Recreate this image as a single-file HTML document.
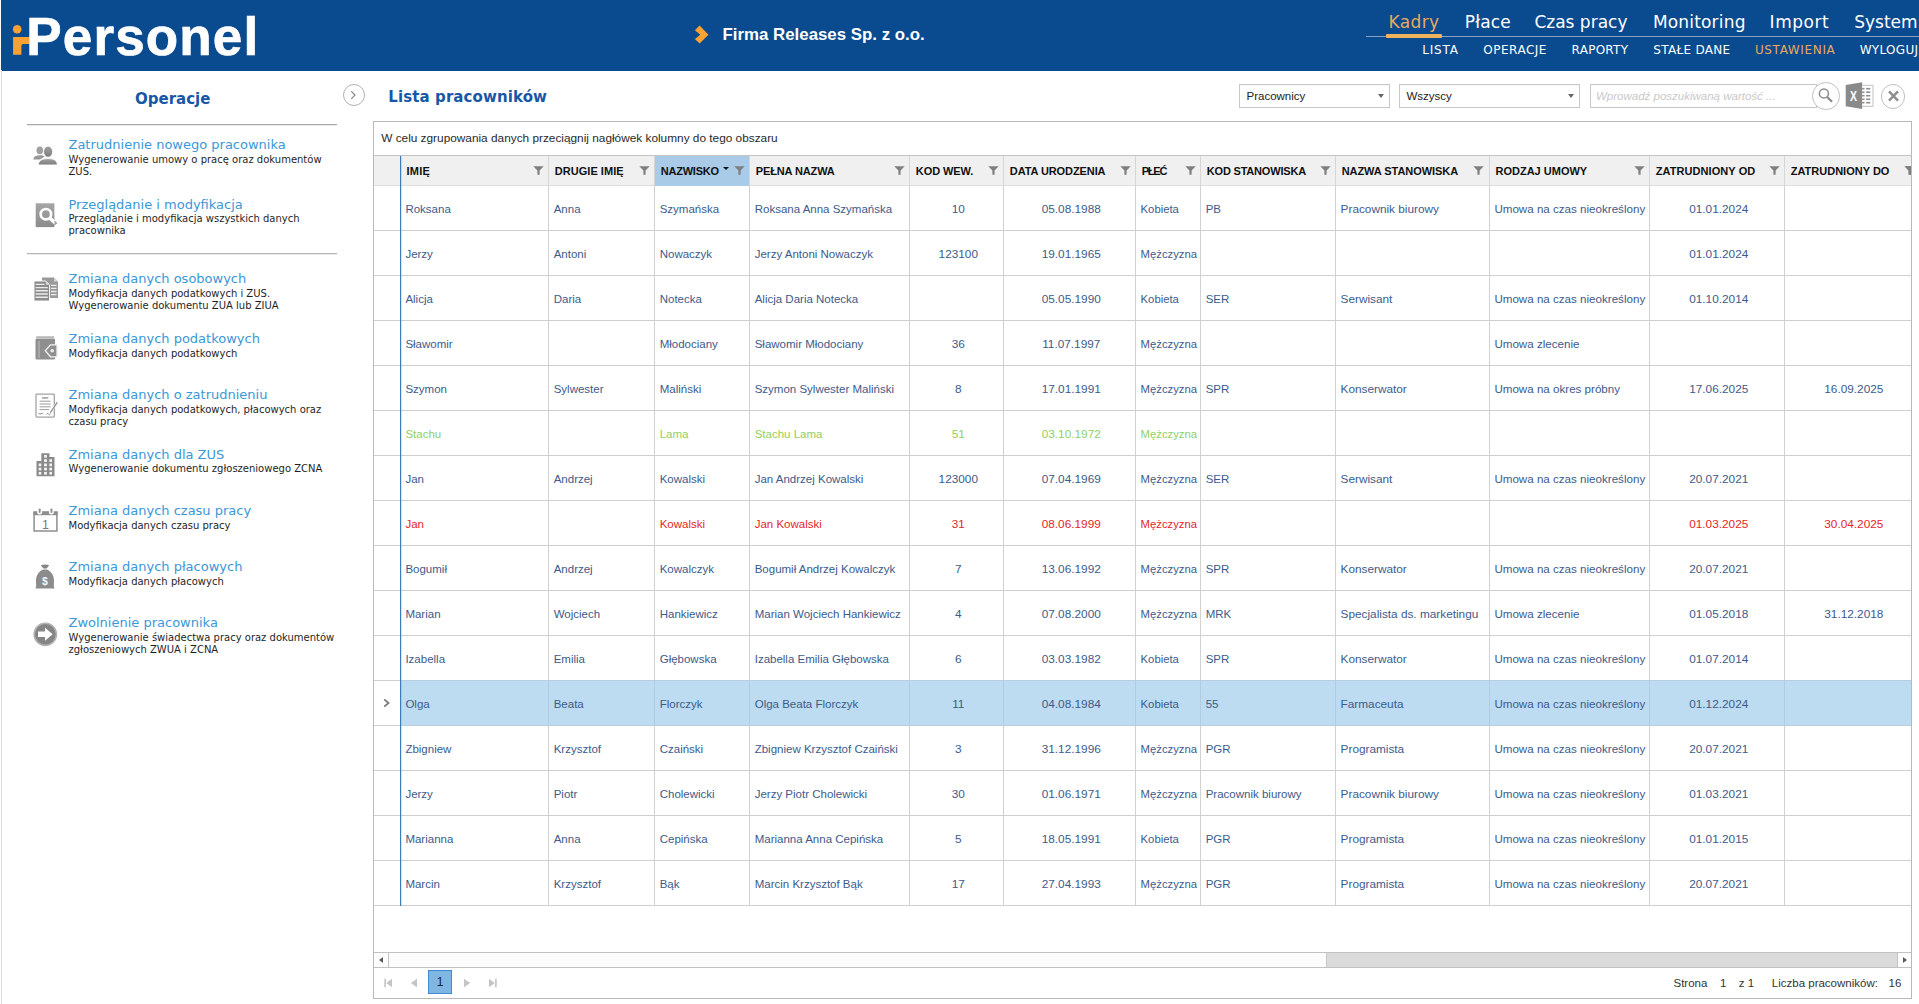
<!DOCTYPE html><html lang="pl"><head><meta charset="utf-8"><title>iPersonel - Lista pracowników</title><style>
*{box-sizing:border-box;margin:0;padding:0}
html,body{width:1919px;height:1004px;overflow:hidden;background:#fff}
body{position:relative;font-family:"Liberation Sans",sans-serif;color:#222}
.abs{position:absolute}
#hdr{position:absolute;left:1px;top:0;width:1918px;height:70.5px;background:#0a4a8f;overflow:hidden}
#lborder{position:absolute;left:1px;top:70px;width:1px;height:934px;background:#dcdcdc}
.logo{position:absolute;left:25.3px;top:6.5px;font:bold 53px/60px "Liberation Sans",sans-serif;color:#fff;white-space:nowrap;letter-spacing:1.15px;-webkit-text-stroke:0.7px #fff}
.firm{position:absolute;left:721.5px;top:23.2px;font:bold 16.85px/24px "Liberation Sans",sans-serif;color:#fff;white-space:nowrap}
.nav1 span,.nav2 span{position:absolute;white-space:nowrap;color:#fff}
.nav1 span{top:11px;font:17px/22px "DejaVu Sans","Liberation Sans",sans-serif}
.nav2 span{top:41.6px;font:12px/16px "DejaVu Sans","Liberation Sans",sans-serif;letter-spacing:.3px}
.or{color:#eaa95c !important}
.side-title{position:absolute;left:68.5px;white-space:nowrap;font:13px/16px "DejaVu Sans","Liberation Sans",sans-serif;color:#3a98d6}
.side-desc{position:absolute;left:68.5px;width:270px;font:10px/12px "DejaVu Sans","Liberation Sans",sans-serif;color:#1f1f1f}
.side-desc div{white-space:nowrap}
.hline{position:absolute;left:27px;width:310px;height:1px;background:#a9a9a9;box-shadow:0 1px 0 rgba(170,170,170,.25)}
.h1{position:absolute;white-space:nowrap;font:bold 15px/20px "DejaVu Sans","Liberation Sans",sans-serif;color:#1857a6}
.sel{position:absolute;top:84px;height:24px;border:1px solid #c8c8c8;background:#fff;font:11.5px/22px "Liberation Sans",sans-serif;color:#222;padding-left:6.5px;box-shadow:inset 0 1px 1px rgba(0,0,0,.04)}
.sel i{position:absolute;right:5px;top:9px;width:0;height:0;border-left:3.5px solid transparent;border-right:3.5px solid transparent;border-top:4px solid #666}
#grid{position:absolute;left:373px;top:121px;width:1539px;height:877.5px;border:1px solid #b9b9b9;background:#fff;overflow:hidden}
.gp{position:absolute;left:0;top:0;width:100%;height:33.5px;border-bottom:1px solid #c4c4c4;font:11.83px/33px "Liberation Sans",sans-serif;color:#2a2a2a;padding-left:7.2px;white-space:nowrap}
.hrow{position:absolute;left:0;top:33.5px;width:100%;height:30px;background:#f0f0f0;border-bottom:1px solid #dedede}
.hc{position:absolute;top:0;height:30px;border-left:1px solid #d6d6d6;font:bold 11px/31.5px "Liberation Sans",sans-serif;color:#111;padding-left:5.5px;white-space:nowrap;overflow:hidden}
.hc.sorted{background:#a9cbe7}
.hc svg{position:absolute;top:10.5px;right:4.5px}
.row{position:absolute;left:0;width:100%;height:45px;border-bottom:1px solid #cfcfcf}
.c{position:absolute;top:0;height:44px;border-left:1px solid #d2d2d2;font:11.4px/46px "Liberation Sans",sans-serif;color:#3c5b8b;padding-left:4.4px;white-space:nowrap;overflow:hidden}
.c.ctr{text-align:center;padding-left:3px;font-size:11.8px}
.row.g .c{color:#8fd05f}
.row.r .c{color:#e5261f}
.row.s{background:linear-gradient(90deg,#fff 26px,#bddbf1 26px)}
.row.s .c{border-left-color:#b3cbe0}
.row.s:before,.row.s:after{content:"";position:absolute;left:27px;right:0;height:1px;background:#b9cde0}
.row.s:before{top:-1px}
.row.s:after{bottom:-1px}
.vline{position:absolute;left:26px;top:34px;width:1px;height:750px;background:#3a7cbc;box-shadow:1px 0 0 rgba(59,130,198,.2)}
</style></head><body>
<div id="hdr">
<svg class="abs" style="left:0;top:0" width="70" height="70" viewBox="0 0 70 70"><circle cx="16.2" cy="29.3" r="4.3" fill="#f8a233"/><path d="M12.1 37.1H28.6V43.9H22.4Q20.4 43.9 20.4 45.9V54.7H12.1Z" fill="#f8a233"/></svg>
<div class="logo">Personel</div>
<svg class="abs" style="left:693px;top:25px" width="16" height="20" viewBox="0 0 16 20"><path d="M0.9 5.3L5.6 0.6L14.5 9.7L5.6 18.6L0.9 14.1L6.3 9.7Z" fill="#f8a233"/></svg>
<div class="firm">Firma Releases Sp. z o.o.</div>
<div class="abs" style="left:1365px;top:35.5px;width:560px;height:1.5px;background:#8aa3c4"></div>
<div class="abs" style="left:1385px;top:34px;width:56px;height:3.6px;background:#efb25e;border-radius:1px"></div>
<div class="nav1">
<span id="n1_0" style="left:1387.6px;letter-spacing:0.35px" class="or">Kadry</span>
<span id="n1_1" style="left:1463.8px;letter-spacing:0.15px">Płace</span>
<span id="n1_2" style="left:1533.4px;letter-spacing:0.00px">Czas pracy</span>
<span id="n1_3" style="left:1651.9px;letter-spacing:0.18px">Monitoring</span>
<span id="n1_4" style="left:1768.6px;letter-spacing:0.55px">Import</span>
<span id="n1_5" style="left:1853.2px;letter-spacing:0.00px">System</span>
</div>
<div class="nav2">
<span id="n2_0" style="left:1421.2px;letter-spacing:0.80px">LISTA</span>
<span id="n2_1" style="left:1482.3px;letter-spacing:0.50px">OPERACJE</span>
<span id="n2_2" style="left:1570.6px;letter-spacing:0.25px">RAPORTY</span>
<span id="n2_3" style="left:1652.3px;letter-spacing:0.30px">STAŁE DANE</span>
<span id="n2_4" style="left:1753.9px;letter-spacing:0.65px" class="or">USTAWIENIA</span>
<span id="n2_5" style="left:1858.7px;letter-spacing:0.30px">WYLOGUJ</span>
</div>
</div>
<div id="lborder"></div>
<div class="h1" id="h_op" style="left:135px;top:89px">Operacje</div>
<div class="hline" style="top:124px"></div>
<div class="hline" style="top:253px;background:#b6b6b6"></div>
<svg class="abs" style="left:33px;top:145px" width="26" height="21" viewBox="0 0 26 21"><defs><linearGradient id="gp" x1="0" y1="0" x2="0" y2="1"><stop offset="0" stop-color="#a2a2a2"/><stop offset="1" stop-color="#7c7c7c"/></linearGradient></defs><ellipse cx="6.8" cy="5.3" rx="3.3" ry="3.9" fill="#a0a0a0"/><path d="M0.2 14.6C0.6 11.6 3 10.3 6.8 10.3C9 10.3 10.6 10.8 11.6 11.6L7 14.6Z" fill="#989898"/><path d="M5.3 20C5.3 15.4 9 13.6 15 13.6C21 13.6 24.3 15.4 24.3 20Z" fill="url(#gp)" stroke="#fff" stroke-width="0.9"/><ellipse cx="15.1" cy="6.7" rx="4.6" ry="5.6" fill="url(#gp)" stroke="#fff" stroke-width="1"/></svg>
<div class="side-title" id="st0" style="top:136.8px">Zatrudnienie nowego pracownika</div>
<div class="side-desc" id="sd0" style="top:153.5px"><div>Wygenerowanie umowy o pracę oraz dokumentów</div><div>ZUS.</div></div>
<svg class="abs" style="left:35px;top:203px" width="24" height="25" viewBox="0 0 24 25"><defs><linearGradient id="gs" x1="0" y1="0" x2="0" y2="1"><stop offset="0" stop-color="#a6a6a6"/><stop offset="1" stop-color="#8c8c8c"/></linearGradient></defs><rect x="0.7" y="0.3" width="18.7" height="23.8" fill="url(#gs)"/><circle cx="10.9" cy="11.2" r="5.2" fill="none" stroke="#fff" stroke-width="2.7"/><path d="M15 15.3L20.3 20" stroke="#fff" stroke-width="3.6" stroke-linecap="butt"/><path d="M19.4 17.2L22.4 20.2L19.6 22.6Z" fill="#a0a0a0"/></svg>
<div class="side-title" id="st1" style="top:196.5px">Przeglądanie i modyfikacja</div>
<div class="side-desc" id="sd1" style="top:213.2px"><div>Przeglądanie i modyfikacja wszystkich danych</div><div>pracownika</div></div>
<svg class="abs" style="left:32.5px;top:277px" width="26" height="25" viewBox="0 0 26 25"><path d="M9 0.5H21L25 4.5V21H9Z" fill="#9a9a9a"/><path d="M21 0.5V4.5H25Z" fill="#d6d6d6"/><g stroke="#ececec" stroke-width="1.3"><path d="M18 8.3H23.5M18 11.4H23.5M18 14.5H23.5M18 17.6H23.5"/></g><path d="M1 4H12.8L16.5 7.7V24H1Z" fill="#8c8c8c" stroke="#fff" stroke-width="0.9"/><path d="M12.8 4V7.7H16.5Z" fill="#dadada"/><g stroke="#ececec" stroke-width="1.4"><path d="M2.6 7.4H11.5M2.6 10.6H14.8M2.6 13.8H14.8M2.6 17H14.8M2.6 20.2H14.8"/></g></svg>
<div class="side-title" id="st2" style="top:271.1px">Zmiana danych osobowych</div>
<div class="side-desc" id="sd2" style="top:287.8px"><div>Modyfikacja danych podatkowych i ZUS.</div><div>Wygenerowanie dokumentu ZUA lub ZIUA</div></div>
<svg class="abs" style="left:35px;top:335px" width="23" height="26" viewBox="0 0 23 26"><path d="M1.2 2.1H19" stroke="#ababab" stroke-width="1.5"/><rect x="0.5" y="3.6" width="19.5" height="21" rx="1.3" fill="#8f8f8f"/><path d="M4 6V23" stroke="#c4c4c4" stroke-width="0.9"/><path d="M10.3 15.8L15.5 9.8H22V21.8H15.5Z" fill="#8f8f8f" stroke="#f2f2f2" stroke-width="1.3"/><circle cx="17.2" cy="15.8" r="1.8" fill="#ececec"/></svg>
<div class="side-title" id="st3" style="top:331.0px">Zmiana danych podatkowych</div>
<div class="side-desc" id="sd3" style="top:347.7px"><div>Modyfikacja danych podatkowych</div></div>
<svg class="abs" style="left:35px;top:393px" width="24" height="26" viewBox="0 0 24 26"><rect x="1" y="1.2" width="18.3" height="22.9" rx="0.8" fill="#fff" stroke="#a2a2a2" stroke-width="1.25"/><g stroke="#9c9c9c" stroke-width="1"><path d="M7 4.9H13.3" stroke-width="1.5"/><path d="M4.6 8.2H15.6M4.6 11H15.6M4.6 13.8H15.6M4.6 16.6H14"/></g><path d="M3.6 19.8Q4.5 22 6 20.8T8.4 21M11.5 21.2Q13 19.5 13.5 21.2T15.8 20.5" stroke="#8c8c8c" stroke-width="1" fill="none"/><path d="M21.7 8.6L23 9.8L16.3 19.8L14.6 20.9L14.9 18.9Z" fill="#8a8a8a" stroke="#fff" stroke-width="0.5"/></svg>
<div class="side-title" id="st4" style="top:386.8px">Zmiana danych o zatrudnieniu</div>
<div class="side-desc" id="sd4" style="top:403.5px"><div>Modyfikacja danych podatkowych, płacowych oraz</div><div>czasu pracy</div></div>
<svg class="abs" style="left:36px;top:451.5px" width="19" height="25" viewBox="0 0 19 25"><path d="M5.3 1.2H13.5V5H18.5V24.3H0.5V9H5.3Z" fill="#8a8a8a"/><g fill="#f4f4f4"><rect x="8.1" y="3.0" width="2.8" height="2.7"/><rect x="8.1" y="7.2" width="2.8" height="2.7"/><rect x="8.1" y="11.5" width="2.8" height="2.7"/><rect x="8.1" y="15.7" width="2.8" height="2.7"/><rect x="8.1" y="19.9" width="2.8" height="2.7"/><rect x="13.4" y="7.2" width="2.6" height="2.7"/><rect x="13.4" y="11.5" width="2.6" height="2.7"/><rect x="13.4" y="15.7" width="2.6" height="2.7"/><rect x="13.4" y="19.9" width="2.6" height="2.7"/><rect x="2.7" y="11.5" width="2.6" height="2.7"/><rect x="2.7" y="15.7" width="2.6" height="2.7"/><rect x="2.7" y="19.9" width="2.6" height="2.7"/></g></svg>
<div class="side-title" id="st5" style="top:446.5px">Zmiana danych dla ZUS</div>
<div class="side-desc" id="sd5" style="top:463.2px"><div>Wygenerowanie dokumentu zgłoszeniowego ZCNA</div></div>
<svg class="abs" style="left:33px;top:507.5px" width="25" height="24" viewBox="0 0 25 24"><path d="M1.1 4.2H23.9V22.9H1.1Z" fill="#fff" stroke="#8e8e8e" stroke-width="1.5"/><path d="M0.4 3.4H24.6V7.2H0.4Z" fill="#8e8e8e"/><circle cx="6.6" cy="3.9" r="2.5" fill="#fff"/><circle cx="18.4" cy="3.9" r="2.5" fill="#fff"/><rect x="5.7" y="0.4" width="1.9" height="4.6" rx="0.9" fill="#8e8e8e"/><rect x="17.5" y="0.4" width="1.9" height="4.6" rx="0.9" fill="#8e8e8e"/><text x="12.4" y="20.6" text-anchor="middle" font-family="Liberation Sans, sans-serif" font-size="12.5" fill="#7a7a7a">1</text></svg>
<div class="side-title" id="st6" style="top:502.8px">Zmiana danych czasu pracy</div>
<div class="side-desc" id="sd6" style="top:519.5px"><div>Modyfikacja danych czasu pracy</div></div>
<svg class="abs" style="left:35px;top:563.5px" width="20" height="26" viewBox="0 0 20 26"><path d="M5.8 1.3Q10 -0.3 14.2 1.3L11.6 4.4H8.4Z" fill="#858585"/><path d="M8 5.6H12C16 7.5 19 11.5 19 16.5C19 20.5 18.3 22 19.7 24.6H0.3C1.7 22 1 20.5 1 16.5C1 11.5 4 7.500 8 5.6Z" fill="#8c8c8c"/><text x="10" y="20.6" text-anchor="middle" font-family="Liberation Sans, sans-serif" font-weight="bold" font-size="10.5" fill="#f4f4f4">$</text></svg>
<div class="side-title" id="st7" style="top:558.9px">Zmiana danych płacowych</div>
<div class="side-desc" id="sd7" style="top:575.6px"><div>Modyfikacja danych płacowych</div></div>
<svg class="abs" style="left:33px;top:621.5px" width="25" height="25" viewBox="0 0 25 25"><circle cx="12.3" cy="12.3" r="11.9" fill="#b2b2b2"/><circle cx="12.3" cy="12.3" r="10.3" fill="#858585"/><path d="M5 9.6H12V5.8L19.6 12.3L12 18.8V15H5Z" fill="#fff"/></svg>
<div class="side-title" id="st8" style="top:614.9px">Zwolnienie pracownika</div>
<div class="side-desc" id="sd8" style="top:631.6px"><div>Wygenerowanie świadectwa pracy oraz dokumentów</div><div>zgłoszeniowych ZWUA i ZCNA</div></div>
<div class="abs" style="left:342.5px;top:84px;width:22px;height:22px;border:1px solid #b2b2b2;border-radius:50%"></div>
<svg class="abs" style="left:349px;top:89px" width="9" height="12" viewBox="0 0 9 12"><path d="M2.3 2.3L6 6.1L2.3 9.9" fill="none" stroke="#7e7e7e" stroke-width="1.15"/></svg>
<div class="h1" id="h_lp" style="left:388.3px;top:86.8px;letter-spacing:.1px">Lista pracowników</div>
<div class="sel" style="left:1239px;width:151px">Pracownicy<i></i></div>
<div class="sel" style="left:1399px;width:181px">Wszyscy<i></i></div>
<div class="abs" style="left:1590px;top:84px;width:227px;height:23.5px;border:1px solid #c6c6c6;background:#fff;font:italic 11.5px/22px 'Liberation Sans',sans-serif;color:#c9c9c9;padding-left:5px;white-space:nowrap" id="ph">Wprowadź poszukiwaną wartość ...</div>
<div class="abs" style="left:1812px;top:82px;width:27.5px;height:27.5px;border:1px solid #c0c0c0;border-radius:50%;background:#fff"></div>
<svg class="abs" style="left:1817px;top:87px" width="18" height="18" viewBox="0 0 18 18"><circle cx="6.9" cy="6.4" r="4.5" fill="none" stroke="#8a8a8a" stroke-width="1.5"/><path d="M10.2 9.9L15 14.8" stroke="#8a8a8a" stroke-width="2.2" stroke-linecap="butt"/></svg>
<svg class="abs" style="left:1845px;top:82px" width="30" height="28" viewBox="0 0 30 28"><rect x="16" y="3.3" width="12" height="21" fill="#fff" stroke="#c2c2c2" stroke-width="1"/><g fill="#8f8f8f"><rect x="17.1" y="5.9" width="2.4" height="1.6"/><rect x="21.1" y="5.9" width="4.2" height="1.6"/><rect x="17.1" y="9.4" width="2.4" height="1.6"/><rect x="21.1" y="9.4" width="4.2" height="1.6"/><rect x="17.1" y="12.9" width="2.4" height="1.6"/><rect x="21.1" y="12.9" width="4.2" height="1.6"/><rect x="17.1" y="16.5" width="2.4" height="1.6"/><rect x="21.1" y="16.5" width="4.2" height="1.6"/><rect x="17.1" y="19.9" width="2.4" height="1.6"/><rect x="21.1" y="19.9" width="4.2" height="1.6"/></g><path d="M0.7 3.1L17.1 0.2V27L0.7 24.3Z" fill="#8a8a8a"/><text transform="translate(8.5,19.1) scale(0.74,1)" text-anchor="middle" font-family="Liberation Sans, sans-serif" font-weight="bold" font-size="14.2" fill="#fff">X</text></svg>
<div class="abs" style="left:1880.5px;top:84px;width:24.5px;height:24.5px;border:1px solid #c0c0c0;border-radius:50%;background:#fff"></div>
<svg class="abs" style="left:1886.5px;top:90px" width="13" height="12" viewBox="0 0 13 12"><path d="M2 1.4L11 10.6M11 1.4L2 10.6" stroke="#8e8e8e" stroke-width="2.4" stroke-linecap="butt"/></svg>
<div id="grid">
<div class="gp">W celu zgrupowania danych przeciągnij nagłówek kolumny do tego obszaru</div>
<div class="hrow">
<div class="hc" style="left:0;width:26.0px;border-left:0"></div>
<div class="hc" style="left:26.0px;width:148.3px"><span id="hl1" style="letter-spacing:0.244px">IMIĘ</span><svg width="11" height="9" viewBox="0 0 11 9"><path d="M0.3 0.3H10.7L6.6 4.4V8.8H4.4V4.4Z" fill="#7f7f7f"/></svg></div>
<div class="hc" style="left:174.3px;width:106.0px"><span id="hl2" style="letter-spacing:0.032px">DRUGIE IMIĘ</span><svg width="11" height="9" viewBox="0 0 11 9"><path d="M0.3 0.3H10.7L6.6 4.4V8.8H4.4V4.4Z" fill="#7f7f7f"/></svg></div>
<div class="hc sorted" style="left:280.3px;width:95.0px"><span id="hl3" style="letter-spacing:-0.236px">NAZWISKO</span><i style="position:absolute;left:67.5px;top:11px;width:0;height:0;border-left:3px solid transparent;border-right:3px solid transparent;border-top:3.5px solid #111"></i><svg width="11" height="9" viewBox="0 0 11 9"><path d="M0.3 0.3H10.7L6.6 4.4V8.8H4.4V4.4Z" fill="#7f7f7f"/></svg></div>
<div class="hc" style="left:375.3px;width:160.0px"><span id="hl4" style="letter-spacing:-0.133px">PEŁNA NAZWA</span><svg width="11" height="9" viewBox="0 0 11 9"><path d="M0.3 0.3H10.7L6.6 4.4V8.8H4.4V4.4Z" fill="#7f7f7f"/></svg></div>
<div class="hc" style="left:535.3px;width:94.0px"><span id="hl5" style="letter-spacing:-0.070px">KOD WEW.</span><svg width="11" height="9" viewBox="0 0 11 9"><path d="M0.3 0.3H10.7L6.6 4.4V8.8H4.4V4.4Z" fill="#7f7f7f"/></svg></div>
<div class="hc" style="left:629.3px;width:131.9px"><span id="hl6" style="letter-spacing:-0.091px">DATA URODZENIA</span><svg width="11" height="9" viewBox="0 0 11 9"><path d="M0.3 0.3H10.7L6.6 4.4V8.8H4.4V4.4Z" fill="#7f7f7f"/></svg></div>
<div class="hc" style="left:761.2px;width:65.1px"><span id="hl7" style="letter-spacing:-1.186px">PŁEĆ</span><svg width="11" height="9" viewBox="0 0 11 9"><path d="M0.3 0.3H10.7L6.6 4.4V8.8H4.4V4.4Z" fill="#7f7f7f"/></svg></div>
<div class="hc" style="left:826.3px;width:134.9px"><span id="hl8" style="letter-spacing:-0.197px">KOD STANOWISKA</span><svg width="11" height="9" viewBox="0 0 11 9"><path d="M0.3 0.3H10.7L6.6 4.4V8.8H4.4V4.4Z" fill="#7f7f7f"/></svg></div>
<div class="hc" style="left:961.2px;width:153.8px"><span id="hl9" style="letter-spacing:-0.058px">NAZWA STANOWISKA</span><svg width="11" height="9" viewBox="0 0 11 9"><path d="M0.3 0.3H10.7L6.6 4.4V8.8H4.4V4.4Z" fill="#7f7f7f"/></svg></div>
<div class="hc" style="left:1115.0px;width:160.3px"><span id="hl10" style="letter-spacing:0.002px">RODZAJ UMOWY</span><svg width="11" height="9" viewBox="0 0 11 9"><path d="M0.3 0.3H10.7L6.6 4.4V8.8H4.4V4.4Z" fill="#7f7f7f"/></svg></div>
<div class="hc" style="left:1275.3px;width:134.9px"><span id="hl11" style="letter-spacing:0.065px">ZATRUDNIONY OD</span><svg width="11" height="9" viewBox="0 0 11 9"><path d="M0.3 0.3H10.7L6.6 4.4V8.8H4.4V4.4Z" fill="#7f7f7f"/></svg></div>
<div class="hc" style="left:1410.2px;width:135.3px"><span id="hl12" style="letter-spacing:0.008px">ZATRUDNIONY DO</span><svg width="11" height="9" viewBox="0 0 11 9"><path d="M0.3 0.3H10.7L6.6 4.4V8.8H4.4V4.4Z" fill="#7f7f7f"/></svg></div>
<svg class="abs" style="left:1530.5px;top:10.5px" width="11" height="9" viewBox="0 0 11 9"><path d="M0.3 0.3H10.7L6.6 4.4V8.8H4.4V4.4Z" fill="#7f7f7f"/></svg>
</div>
<div class="row " style="top:63.7px">
<div class="c c0" style="left:0;width:26.0px;border-left:0"></div>
<div class="c" style="left:26.0px;width:148.3px;font-size:11.5px">Roksana</div>
<div class="c" style="left:174.3px;width:106.0px;font-size:11.5px">Anna</div>
<div class="c" style="left:280.3px;width:95.0px;font-size:11.5px">Szymańska</div>
<div class="c" style="left:375.3px;width:160.0px;font-size:11.5px">Roksana Anna Szymańska</div>
<div class="c ctr" style="left:535.3px;width:94.0px">10</div>
<div class="c ctr" style="left:629.3px;width:131.9px">05.08.1988</div>
<div class="c" style="left:761.2px;width:65.1px;font-size:11.3px">Kobieta</div>
<div class="c" style="left:826.3px;width:134.9px;font-size:11.5px">PB</div>
<div class="c" style="left:961.2px;width:153.8px;font-size:11.8px">Pracownik biurowy</div>
<div class="c" style="left:1115.0px;width:160.3px;font-size:11.6px">Umowa na czas nieokreślony</div>
<div class="c ctr" style="left:1275.3px;width:134.9px">01.01.2024</div>
<div class="c ctr" style="left:1410.2px;width:135.3px"></div>
</div>
<div class="row " style="top:108.7px">
<div class="c c0" style="left:0;width:26.0px;border-left:0"></div>
<div class="c" style="left:26.0px;width:148.3px;font-size:11.5px">Jerzy</div>
<div class="c" style="left:174.3px;width:106.0px;font-size:11.5px">Antoni</div>
<div class="c" style="left:280.3px;width:95.0px;font-size:11.5px">Nowaczyk</div>
<div class="c" style="left:375.3px;width:160.0px;font-size:11.5px">Jerzy Antoni Nowaczyk</div>
<div class="c ctr" style="left:535.3px;width:94.0px">123100</div>
<div class="c ctr" style="left:629.3px;width:131.9px">19.01.1965</div>
<div class="c" style="left:761.2px;width:65.1px;font-size:11.3px">Mężczyzna</div>
<div class="c" style="left:826.3px;width:134.9px;font-size:11.5px"></div>
<div class="c" style="left:961.2px;width:153.8px;font-size:11.8px"></div>
<div class="c" style="left:1115.0px;width:160.3px;font-size:11.6px"></div>
<div class="c ctr" style="left:1275.3px;width:134.9px">01.01.2024</div>
<div class="c ctr" style="left:1410.2px;width:135.3px"></div>
</div>
<div class="row " style="top:153.7px">
<div class="c c0" style="left:0;width:26.0px;border-left:0"></div>
<div class="c" style="left:26.0px;width:148.3px;font-size:11.5px">Alicja</div>
<div class="c" style="left:174.3px;width:106.0px;font-size:11.5px">Daria</div>
<div class="c" style="left:280.3px;width:95.0px;font-size:11.5px">Notecka</div>
<div class="c" style="left:375.3px;width:160.0px;font-size:11.5px">Alicja Daria Notecka</div>
<div class="c ctr" style="left:535.3px;width:94.0px"></div>
<div class="c ctr" style="left:629.3px;width:131.9px">05.05.1990</div>
<div class="c" style="left:761.2px;width:65.1px;font-size:11.3px">Kobieta</div>
<div class="c" style="left:826.3px;width:134.9px;font-size:11.5px">SER</div>
<div class="c" style="left:961.2px;width:153.8px;font-size:11.8px">Serwisant</div>
<div class="c" style="left:1115.0px;width:160.3px;font-size:11.6px">Umowa na czas nieokreślony</div>
<div class="c ctr" style="left:1275.3px;width:134.9px">01.10.2014</div>
<div class="c ctr" style="left:1410.2px;width:135.3px"></div>
</div>
<div class="row " style="top:198.7px">
<div class="c c0" style="left:0;width:26.0px;border-left:0"></div>
<div class="c" style="left:26.0px;width:148.3px;font-size:11.5px">Sławomir</div>
<div class="c" style="left:174.3px;width:106.0px;font-size:11.5px"></div>
<div class="c" style="left:280.3px;width:95.0px;font-size:11.5px">Młodociany</div>
<div class="c" style="left:375.3px;width:160.0px;font-size:11.5px">Sławomir Młodociany</div>
<div class="c ctr" style="left:535.3px;width:94.0px">36</div>
<div class="c ctr" style="left:629.3px;width:131.9px">11.07.1997</div>
<div class="c" style="left:761.2px;width:65.1px;font-size:11.3px">Mężczyzna</div>
<div class="c" style="left:826.3px;width:134.9px;font-size:11.5px"></div>
<div class="c" style="left:961.2px;width:153.8px;font-size:11.8px"></div>
<div class="c" style="left:1115.0px;width:160.3px;font-size:11.6px">Umowa zlecenie</div>
<div class="c ctr" style="left:1275.3px;width:134.9px"></div>
<div class="c ctr" style="left:1410.2px;width:135.3px"></div>
</div>
<div class="row " style="top:243.7px">
<div class="c c0" style="left:0;width:26.0px;border-left:0"></div>
<div class="c" style="left:26.0px;width:148.3px;font-size:11.5px">Szymon</div>
<div class="c" style="left:174.3px;width:106.0px;font-size:11.5px">Sylwester</div>
<div class="c" style="left:280.3px;width:95.0px;font-size:11.5px">Maliński</div>
<div class="c" style="left:375.3px;width:160.0px;font-size:11.5px">Szymon Sylwester Maliński</div>
<div class="c ctr" style="left:535.3px;width:94.0px">8</div>
<div class="c ctr" style="left:629.3px;width:131.9px">17.01.1991</div>
<div class="c" style="left:761.2px;width:65.1px;font-size:11.3px">Mężczyzna</div>
<div class="c" style="left:826.3px;width:134.9px;font-size:11.5px">SPR</div>
<div class="c" style="left:961.2px;width:153.8px;font-size:11.8px">Konserwator</div>
<div class="c" style="left:1115.0px;width:160.3px;font-size:11.6px">Umowa na okres próbny</div>
<div class="c ctr" style="left:1275.3px;width:134.9px">17.06.2025</div>
<div class="c ctr" style="left:1410.2px;width:135.3px">16.09.2025</div>
</div>
<div class="row g" style="top:288.7px">
<div class="c c0" style="left:0;width:26.0px;border-left:0"></div>
<div class="c" style="left:26.0px;width:148.3px;font-size:11.5px">Stachu</div>
<div class="c" style="left:174.3px;width:106.0px;font-size:11.5px"></div>
<div class="c" style="left:280.3px;width:95.0px;font-size:11.5px">Lama</div>
<div class="c" style="left:375.3px;width:160.0px;font-size:11.5px">Stachu Lama</div>
<div class="c ctr" style="left:535.3px;width:94.0px">51</div>
<div class="c ctr" style="left:629.3px;width:131.9px">03.10.1972</div>
<div class="c" style="left:761.2px;width:65.1px;font-size:11.3px">Mężczyzna</div>
<div class="c" style="left:826.3px;width:134.9px;font-size:11.5px"></div>
<div class="c" style="left:961.2px;width:153.8px;font-size:11.8px"></div>
<div class="c" style="left:1115.0px;width:160.3px;font-size:11.6px"></div>
<div class="c ctr" style="left:1275.3px;width:134.9px"></div>
<div class="c ctr" style="left:1410.2px;width:135.3px"></div>
</div>
<div class="row " style="top:333.7px">
<div class="c c0" style="left:0;width:26.0px;border-left:0"></div>
<div class="c" style="left:26.0px;width:148.3px;font-size:11.5px">Jan</div>
<div class="c" style="left:174.3px;width:106.0px;font-size:11.5px">Andrzej</div>
<div class="c" style="left:280.3px;width:95.0px;font-size:11.5px">Kowalski</div>
<div class="c" style="left:375.3px;width:160.0px;font-size:11.5px">Jan Andrzej Kowalski</div>
<div class="c ctr" style="left:535.3px;width:94.0px">123000</div>
<div class="c ctr" style="left:629.3px;width:131.9px">07.04.1969</div>
<div class="c" style="left:761.2px;width:65.1px;font-size:11.3px">Mężczyzna</div>
<div class="c" style="left:826.3px;width:134.9px;font-size:11.5px">SER</div>
<div class="c" style="left:961.2px;width:153.8px;font-size:11.8px">Serwisant</div>
<div class="c" style="left:1115.0px;width:160.3px;font-size:11.6px">Umowa na czas nieokreślony</div>
<div class="c ctr" style="left:1275.3px;width:134.9px">20.07.2021</div>
<div class="c ctr" style="left:1410.2px;width:135.3px"></div>
</div>
<div class="row r" style="top:378.7px">
<div class="c c0" style="left:0;width:26.0px;border-left:0"></div>
<div class="c" style="left:26.0px;width:148.3px;font-size:11.5px">Jan</div>
<div class="c" style="left:174.3px;width:106.0px;font-size:11.5px"></div>
<div class="c" style="left:280.3px;width:95.0px;font-size:11.5px">Kowalski</div>
<div class="c" style="left:375.3px;width:160.0px;font-size:11.5px">Jan Kowalski</div>
<div class="c ctr" style="left:535.3px;width:94.0px">31</div>
<div class="c ctr" style="left:629.3px;width:131.9px">08.06.1999</div>
<div class="c" style="left:761.2px;width:65.1px;font-size:11.3px">Mężczyzna</div>
<div class="c" style="left:826.3px;width:134.9px;font-size:11.5px"></div>
<div class="c" style="left:961.2px;width:153.8px;font-size:11.8px"></div>
<div class="c" style="left:1115.0px;width:160.3px;font-size:11.6px"></div>
<div class="c ctr" style="left:1275.3px;width:134.9px">01.03.2025</div>
<div class="c ctr" style="left:1410.2px;width:135.3px">30.04.2025</div>
</div>
<div class="row " style="top:423.7px">
<div class="c c0" style="left:0;width:26.0px;border-left:0"></div>
<div class="c" style="left:26.0px;width:148.3px;font-size:11.5px">Bogumił</div>
<div class="c" style="left:174.3px;width:106.0px;font-size:11.5px">Andrzej</div>
<div class="c" style="left:280.3px;width:95.0px;font-size:11.5px">Kowalczyk</div>
<div class="c" style="left:375.3px;width:160.0px;font-size:11.5px">Bogumił Andrzej Kowalczyk</div>
<div class="c ctr" style="left:535.3px;width:94.0px">7</div>
<div class="c ctr" style="left:629.3px;width:131.9px">13.06.1992</div>
<div class="c" style="left:761.2px;width:65.1px;font-size:11.3px">Mężczyzna</div>
<div class="c" style="left:826.3px;width:134.9px;font-size:11.5px">SPR</div>
<div class="c" style="left:961.2px;width:153.8px;font-size:11.8px">Konserwator</div>
<div class="c" style="left:1115.0px;width:160.3px;font-size:11.6px">Umowa na czas nieokreślony</div>
<div class="c ctr" style="left:1275.3px;width:134.9px">20.07.2021</div>
<div class="c ctr" style="left:1410.2px;width:135.3px"></div>
</div>
<div class="row " style="top:468.7px">
<div class="c c0" style="left:0;width:26.0px;border-left:0"></div>
<div class="c" style="left:26.0px;width:148.3px;font-size:11.5px">Marian</div>
<div class="c" style="left:174.3px;width:106.0px;font-size:11.5px">Wojciech</div>
<div class="c" style="left:280.3px;width:95.0px;font-size:11.5px">Hankiewicz</div>
<div class="c" style="left:375.3px;width:160.0px;font-size:11.5px">Marian Wojciech Hankiewicz</div>
<div class="c ctr" style="left:535.3px;width:94.0px">4</div>
<div class="c ctr" style="left:629.3px;width:131.9px">07.08.2000</div>
<div class="c" style="left:761.2px;width:65.1px;font-size:11.3px">Mężczyzna</div>
<div class="c" style="left:826.3px;width:134.9px;font-size:11.5px">MRK</div>
<div class="c" style="left:961.2px;width:153.8px;font-size:11.8px">Specjalista ds. marketingu</div>
<div class="c" style="left:1115.0px;width:160.3px;font-size:11.6px">Umowa zlecenie</div>
<div class="c ctr" style="left:1275.3px;width:134.9px">01.05.2018</div>
<div class="c ctr" style="left:1410.2px;width:135.3px">31.12.2018</div>
</div>
<div class="row " style="top:513.7px">
<div class="c c0" style="left:0;width:26.0px;border-left:0"></div>
<div class="c" style="left:26.0px;width:148.3px;font-size:11.5px">Izabella</div>
<div class="c" style="left:174.3px;width:106.0px;font-size:11.5px">Emilia</div>
<div class="c" style="left:280.3px;width:95.0px;font-size:11.5px">Głębowska</div>
<div class="c" style="left:375.3px;width:160.0px;font-size:11.5px">Izabella Emilia Głębowska</div>
<div class="c ctr" style="left:535.3px;width:94.0px">6</div>
<div class="c ctr" style="left:629.3px;width:131.9px">03.03.1982</div>
<div class="c" style="left:761.2px;width:65.1px;font-size:11.3px">Kobieta</div>
<div class="c" style="left:826.3px;width:134.9px;font-size:11.5px">SPR</div>
<div class="c" style="left:961.2px;width:153.8px;font-size:11.8px">Konserwator</div>
<div class="c" style="left:1115.0px;width:160.3px;font-size:11.6px">Umowa na czas nieokreślony</div>
<div class="c ctr" style="left:1275.3px;width:134.9px">01.07.2014</div>
<div class="c ctr" style="left:1410.2px;width:135.3px"></div>
</div>
<div class="row s" style="top:558.7px">
<div class="c c0" style="left:0;width:26.0px;border-left:0"><svg style="position:absolute;left:9px;top:17.5px" width="8" height="10" viewBox="0 0 8 10"><path d="M1.2 1.3L5.6 5L1.2 8.7" fill="none" stroke="#7a7a7a" stroke-width="1.7"/></svg></div>
<div class="c" style="left:26.0px;width:148.3px;font-size:11.5px">Olga</div>
<div class="c" style="left:174.3px;width:106.0px;font-size:11.5px">Beata</div>
<div class="c" style="left:280.3px;width:95.0px;font-size:11.5px">Florczyk</div>
<div class="c" style="left:375.3px;width:160.0px;font-size:11.5px">Olga Beata Florczyk</div>
<div class="c ctr" style="left:535.3px;width:94.0px">11</div>
<div class="c ctr" style="left:629.3px;width:131.9px">04.08.1984</div>
<div class="c" style="left:761.2px;width:65.1px;font-size:11.3px">Kobieta</div>
<div class="c" style="left:826.3px;width:134.9px;font-size:11.5px">55</div>
<div class="c" style="left:961.2px;width:153.8px;font-size:11.8px">Farmaceuta</div>
<div class="c" style="left:1115.0px;width:160.3px;font-size:11.6px">Umowa na czas nieokreślony</div>
<div class="c ctr" style="left:1275.3px;width:134.9px">01.12.2024</div>
<div class="c ctr" style="left:1410.2px;width:135.3px"></div>
</div>
<div class="row " style="top:603.7px">
<div class="c c0" style="left:0;width:26.0px;border-left:0"></div>
<div class="c" style="left:26.0px;width:148.3px;font-size:11.5px">Zbigniew</div>
<div class="c" style="left:174.3px;width:106.0px;font-size:11.5px">Krzysztof</div>
<div class="c" style="left:280.3px;width:95.0px;font-size:11.5px">Czaiński</div>
<div class="c" style="left:375.3px;width:160.0px;font-size:11.5px">Zbigniew Krzysztof Czaiński</div>
<div class="c ctr" style="left:535.3px;width:94.0px">3</div>
<div class="c ctr" style="left:629.3px;width:131.9px">31.12.1996</div>
<div class="c" style="left:761.2px;width:65.1px;font-size:11.3px">Mężczyzna</div>
<div class="c" style="left:826.3px;width:134.9px;font-size:11.5px">PGR</div>
<div class="c" style="left:961.2px;width:153.8px;font-size:11.8px">Programista</div>
<div class="c" style="left:1115.0px;width:160.3px;font-size:11.6px">Umowa na czas nieokreślony</div>
<div class="c ctr" style="left:1275.3px;width:134.9px">20.07.2021</div>
<div class="c ctr" style="left:1410.2px;width:135.3px"></div>
</div>
<div class="row " style="top:648.7px">
<div class="c c0" style="left:0;width:26.0px;border-left:0"></div>
<div class="c" style="left:26.0px;width:148.3px;font-size:11.5px">Jerzy</div>
<div class="c" style="left:174.3px;width:106.0px;font-size:11.5px">Piotr</div>
<div class="c" style="left:280.3px;width:95.0px;font-size:11.5px">Cholewicki</div>
<div class="c" style="left:375.3px;width:160.0px;font-size:11.5px">Jerzy Piotr Cholewicki</div>
<div class="c ctr" style="left:535.3px;width:94.0px">30</div>
<div class="c ctr" style="left:629.3px;width:131.9px">01.06.1971</div>
<div class="c" style="left:761.2px;width:65.1px;font-size:11.3px">Mężczyzna</div>
<div class="c" style="left:826.3px;width:134.9px;font-size:11.5px">Pracownik biurowy</div>
<div class="c" style="left:961.2px;width:153.8px;font-size:11.8px">Pracownik biurowy</div>
<div class="c" style="left:1115.0px;width:160.3px;font-size:11.6px">Umowa na czas nieokreślony</div>
<div class="c ctr" style="left:1275.3px;width:134.9px">01.03.2021</div>
<div class="c ctr" style="left:1410.2px;width:135.3px"></div>
</div>
<div class="row " style="top:693.7px">
<div class="c c0" style="left:0;width:26.0px;border-left:0"></div>
<div class="c" style="left:26.0px;width:148.3px;font-size:11.5px">Marianna</div>
<div class="c" style="left:174.3px;width:106.0px;font-size:11.5px">Anna</div>
<div class="c" style="left:280.3px;width:95.0px;font-size:11.5px">Cepińska</div>
<div class="c" style="left:375.3px;width:160.0px;font-size:11.5px">Marianna Anna Cepińska</div>
<div class="c ctr" style="left:535.3px;width:94.0px">5</div>
<div class="c ctr" style="left:629.3px;width:131.9px">18.05.1991</div>
<div class="c" style="left:761.2px;width:65.1px;font-size:11.3px">Kobieta</div>
<div class="c" style="left:826.3px;width:134.9px;font-size:11.5px">PGR</div>
<div class="c" style="left:961.2px;width:153.8px;font-size:11.8px">Programista</div>
<div class="c" style="left:1115.0px;width:160.3px;font-size:11.6px">Umowa na czas nieokreślony</div>
<div class="c ctr" style="left:1275.3px;width:134.9px">01.01.2015</div>
<div class="c ctr" style="left:1410.2px;width:135.3px"></div>
</div>
<div class="row " style="top:738.7px">
<div class="c c0" style="left:0;width:26.0px;border-left:0"></div>
<div class="c" style="left:26.0px;width:148.3px;font-size:11.5px">Marcin</div>
<div class="c" style="left:174.3px;width:106.0px;font-size:11.5px">Krzysztof</div>
<div class="c" style="left:280.3px;width:95.0px;font-size:11.5px">Bąk</div>
<div class="c" style="left:375.3px;width:160.0px;font-size:11.5px">Marcin Krzysztof Bąk</div>
<div class="c ctr" style="left:535.3px;width:94.0px">17</div>
<div class="c ctr" style="left:629.3px;width:131.9px">27.04.1993</div>
<div class="c" style="left:761.2px;width:65.1px;font-size:11.3px">Mężczyzna</div>
<div class="c" style="left:826.3px;width:134.9px;font-size:11.5px">PGR</div>
<div class="c" style="left:961.2px;width:153.8px;font-size:11.8px">Programista</div>
<div class="c" style="left:1115.0px;width:160.3px;font-size:11.6px">Umowa na czas nieokreślony</div>
<div class="c ctr" style="left:1275.3px;width:134.9px">20.07.2021</div>
<div class="c ctr" style="left:1410.2px;width:135.3px"></div>
</div>
<div class="vline"></div>
<div class="abs" style="left:0;top:830px;width:1537px;height:16px;background:#dbdbdb;border-top:1px solid #c2c2c2;border-bottom:1px solid #c2c2c2"></div>
<div class="abs" style="left:0;top:831px;width:14.5px;height:14px;background:#fff;border-right:1px solid #c2c2c2"></div>
<i class="abs" style="left:4.5px;top:835px;width:0;height:0;border-top:3px solid transparent;border-bottom:3px solid transparent;border-right:4.5px solid #5a5a5a"></i>
<div class="abs" style="left:15px;top:831px;width:938px;height:14px;background:#fcfcfc;border-right:1px solid #c8c8c8"></div>
<div class="abs" style="left:1522.5px;top:831px;width:15px;height:14px;background:#fff;border-left:1px solid #c2c2c2"></div>
<i class="abs" style="left:1528.5px;top:835px;width:0;height:0;border-top:3px solid transparent;border-bottom:3px solid transparent;border-left:4.5px solid #5a5a5a"></i>
<svg class="abs" style="left:10px;top:856px" width="9" height="10" viewBox="0 0 9 10"><rect x="0.3" y="0.8" width="1.6" height="8.4" fill="#c4c4c4"/><path d="M8 0.8V9.2L2.2 5Z" fill="#c4c4c4"/></svg>
<svg class="abs" style="left:36px;top:856px" width="8" height="10" viewBox="0 0 8 10"><path d="M7 0.8V9.2L0.8 5Z" fill="#c4c4c4"/></svg>
<div class="abs" style="left:54px;top:848px;width:24px;height:24px;background:#80b6e4;border:1px solid #3f8ad0;font:12px/22px 'Liberation Sans',sans-serif;color:#123;text-align:center">1</div>
<svg class="abs" style="left:89px;top:856px" width="8" height="10" viewBox="0 0 8 10"><path d="M1 0.8V9.2L7.2 5Z" fill="#c4c4c4"/></svg>
<svg class="abs" style="left:114px;top:856px" width="9" height="10" viewBox="0 0 9 10"><path d="M1 0.8V9.2L6.8 5Z" fill="#c4c4c4"/><rect x="7.1" y="0.8" width="1.6" height="8.4" fill="#c4c4c4"/></svg>
<div class="abs ft" style="left:1299.5px;top:853px;font:11.5px/16px 'Liberation Sans',sans-serif;color:#333;white-space:nowrap">Strona</div>
<div class="abs ft" style="left:1346.0px;top:853px;font:11.5px/16px 'Liberation Sans',sans-serif;color:#333;white-space:nowrap">1</div>
<div class="abs ft" style="left:1364.7px;top:853px;font:11.5px/16px 'Liberation Sans',sans-serif;color:#333;white-space:nowrap">z 1</div>
<div class="abs ft" style="left:1397.8px;top:853px;font:11.5px/16px 'Liberation Sans',sans-serif;color:#333;white-space:nowrap">Liczba pracowników:</div>
<div class="abs ft" style="left:1514.5px;top:853px;font:11.5px/16px 'Liberation Sans',sans-serif;color:#333;white-space:nowrap">16</div>
</div>
</body></html>
